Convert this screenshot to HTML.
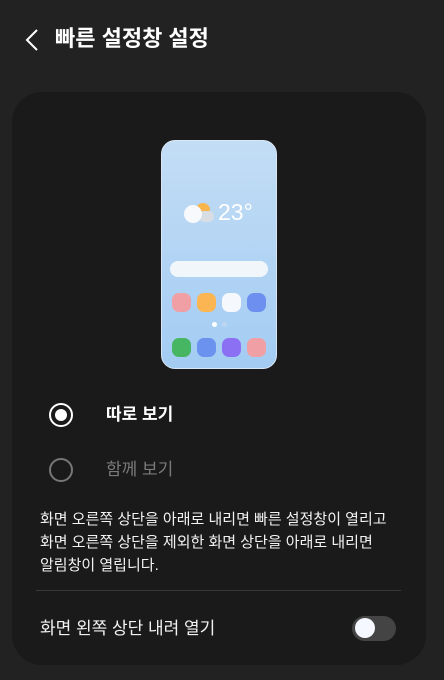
<!DOCTYPE html>
<html><head><meta charset="utf-8"><style>
*{margin:0;padding:0;box-sizing:border-box}
body{width:444px;height:680px;background:#232223;font-family:"Liberation Sans","Noto Sans CJK KR",sans-serif;position:relative;overflow:hidden;color:#fff}
.t{position:absolute;white-space:nowrap}
.card{position:absolute;left:12px;top:92px;width:414px;height:573px;background:#1b1a1b;border-radius:30px}
.phone{position:absolute;left:161px;top:140px;width:116px;height:229px;border-radius:14px;background:linear-gradient(#c3ddf5,#a3ccf3);border:1px solid #d8e6f5}
.ic{position:absolute;width:19px;height:19px;border-radius:7px}
</style></head><body>
<svg class="t" style="left:24px;top:28px" width="16" height="24" viewBox="0 0 16 24"><path d="M13 2 L3 12 L13 22" stroke="#fff" stroke-width="2" fill="none"/></svg>
<div class="t" style="left:55px;top:24px;font-size:22px;font-weight:bold;line-height:30px">빠른 설정창 설정</div>
<div class="card"></div>
<div class="phone">
  <div style="position:absolute;left:34px;top:62px;width:14px;height:14px;border-radius:50%;background:#f8b64c"></div>
  <div style="position:absolute;left:37px;top:70px;width:15px;height:11px;border-radius:5px;background:#d8dde3"></div>
  <div style="position:absolute;left:22px;top:64px;width:18px;height:18px;border-radius:50%;background:#f7f9fc"></div>
  <div class="t" style="left:56px;top:57px;font-size:23px;color:#fff;line-height:28px">23°</div>
  <div style="position:absolute;left:8px;top:120px;width:98px;height:16px;border-radius:8px;background:#f1f6fb"></div>
  <div class="ic" style="left:10px;top:152px;background:#f0a0a4"></div>
  <div class="ic" style="left:35px;top:152px;background:#fbb552"></div>
  <div class="ic" style="left:60px;top:152px;background:#f5f8fc"></div>
  <div class="ic" style="left:85px;top:152px;background:#6d8ff0"></div>
  <div style="position:absolute;left:50px;top:181px;width:5px;height:5px;border-radius:50%;background:#fff"></div>
  <div style="position:absolute;left:60px;top:181px;width:5px;height:5px;border-radius:50%;background:#bcd6f2"></div>
  <div class="ic" style="left:10px;top:197px;background:#47b662"></div>
  <div class="ic" style="left:35px;top:197px;background:#6b92ef"></div>
  <div class="ic" style="left:60px;top:197px;background:#8c70f3"></div>
  <div class="ic" style="left:85px;top:197px;background:#f0a0a4"></div>
</div>
<div style="position:absolute;left:49px;top:403px;width:24px;height:24px;border-radius:50%;border:2.5px solid #fff"></div>
<div style="position:absolute;left:55px;top:409px;width:12px;height:12px;border-radius:50%;background:#fff"></div>
<div class="t" style="left:106px;top:403px;font-size:17px;font-weight:bold;line-height:24px">따로 보기</div>
<div style="position:absolute;left:49px;top:458px;width:24px;height:24px;border-radius:50%;border:2px solid #777"></div>
<div class="t" style="left:106px;top:458px;font-size:17px;color:#7a7a7a;line-height:24px">함께 보기</div>
<div class="t" style="left:40px;top:508px;font-size:15px;line-height:23px;color:#f2f2f2">화면 오른쪽 상단을 아래로 내리면 빠른 설정창이 열리고<br>화면 오른쪽 상단을 제외한 화면 상단을 아래로 내리면<br>알림창이 열립니다.</div>
<div style="position:absolute;left:36px;top:590px;width:365px;height:1px;background:#3a393a"></div>
<div class="t" style="left:40px;top:617px;font-size:17px;line-height:24px;color:#f2f2f2">화면 왼쪽 상단 내려 열기</div>
<div style="position:absolute;left:352px;top:616px;width:44px;height:25px;border-radius:13px;background:#444"></div>
<div style="position:absolute;left:355px;top:618px;width:20px;height:20px;border-radius:50%;background:#f5f8ff"></div>
</body></html>
